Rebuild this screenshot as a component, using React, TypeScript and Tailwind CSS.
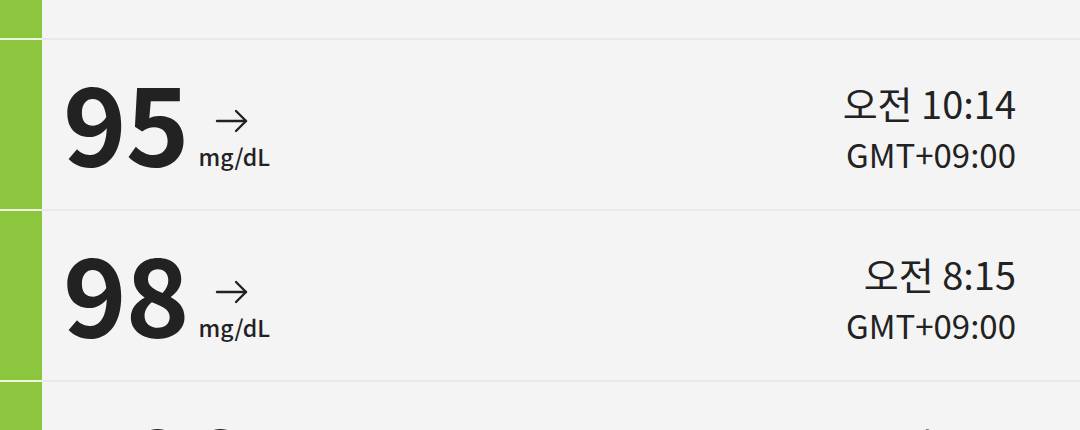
const readings = [
  { value: "103", time: "오전 11:58" },
  { value: "95", time: "오전 10:14" },
  { value: "98", time: "오전 8:15" },
  { value: "100", time: "오전 6:03" },
];

function Arrow() {
  return (
    <svg width="34" height="24" viewBox="0 0 34 24" fill="none" stroke="#222" strokeWidth="2.4" strokeLinecap="round" strokeLinejoin="round">
      <path d="M2 12h29" />
      <path d="M21 2l10 10-10 10" />
    </svg>
  );
}

function Row({ value, time }: { value: string; time: string }) {
  return (
    <div className="flex h-[171px]">
      <div className="w-[42px] bg-[#8cc63e] border-b-2 border-[#eef7e2]" />
      <div className="flex-1 flex items-center justify-between bg-[#f4f4f4] border-b-2 border-[#e9e9e9] pl-[21px] pr-[64px]">
        <div className="flex items-end mt-[-12px]">
          <span className="text-[108px] leading-none font-bold tracking-[-1px] text-[#222]">{value}</span>
          <div className="flex flex-col items-start ml-[10px] mb-[5px]">
            <div className="ml-[17px] mb-[12px]">
              <Arrow />
            </div>
            <span className="text-[23px] leading-none font-medium text-[#222]">mg/dL</span>
          </div>
        </div>
        <div className="flex flex-col items-end text-[#222] mt-[4px]">
          <span className="text-[38px] leading-[46px]">{time}</span>
          <span className="text-[33px] leading-[40px] mt-[8px]">GMT+09:00</span>
        </div>
      </div>
    </div>
  );
}

export default function App() {
  return (
    <div
      className="w-[1080px] h-[430px] overflow-hidden bg-[#f4f4f4]"
      style={{ fontFamily: '"Noto Sans CJK KR", "Noto Sans", sans-serif' }}
    >
      <div className="-mt-[131px]">
        {readings.map((r) => (
          <Row key={r.value} value={r.value} time={r.time} />
        ))}
      </div>
    </div>
  );
}
